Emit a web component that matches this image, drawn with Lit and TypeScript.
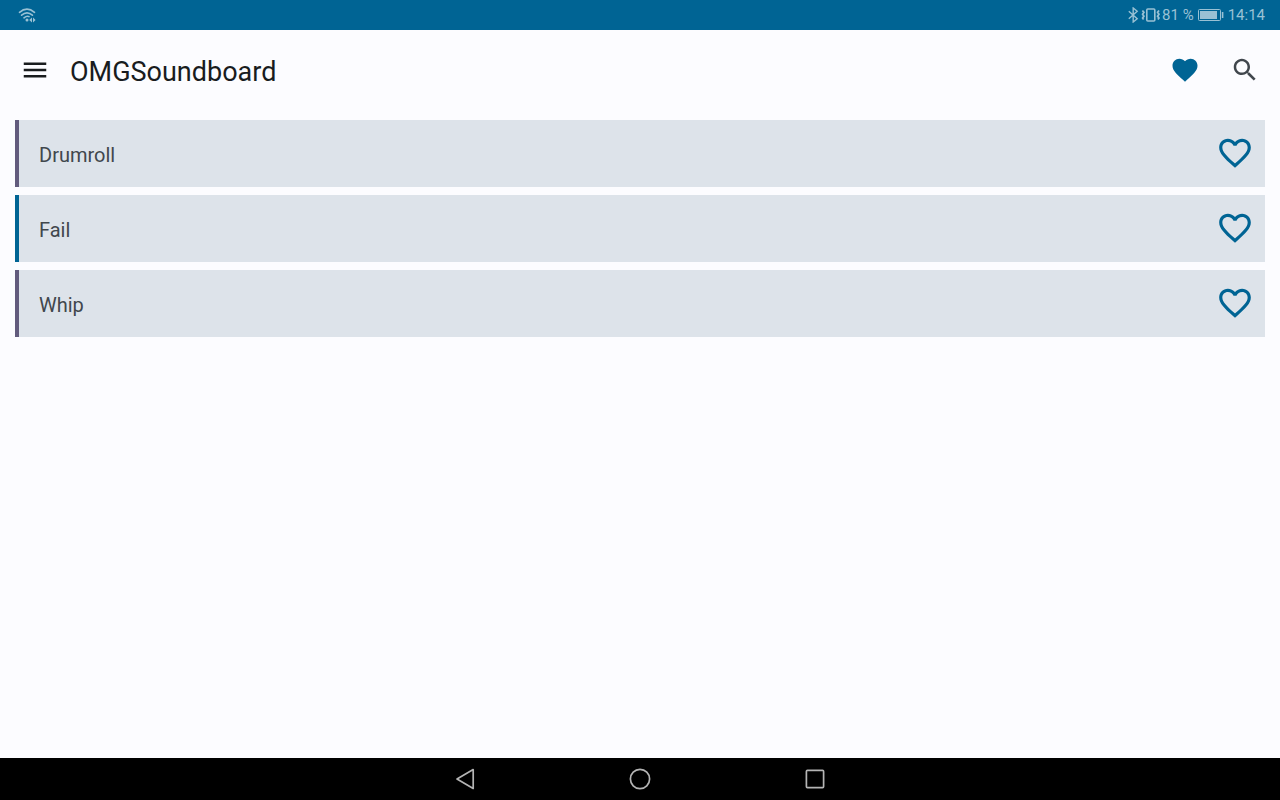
import { LitElement, html, css, svg } from "lit";
import { customElement, property, state } from "lit/decorators.js";

const HEART =
  "M12 21.35l-1.45-1.32C5.4 15.36 2 12.28 2 8.5 2 5.42 4.42 3 7.5 3c1.74 0 3.41.81 4.5 2.09C13.09 3.81 14.76 3 16.5 3 19.58 3 22 5.42 22 8.5c0 3.78-3.4 6.86-8.55 11.54L12 21.35z";
const HEART_OUTLINE =
  "M16.5 3c-1.74 0-3.41.81-4.5 2.09C10.91 3.81 9.24 3 7.5 3 4.42 3 2 5.42 2 8.5c0 3.78 3.4 6.86 8.55 11.54L12 21.35l1.45-1.32C18.6 15.36 22 12.28 22 8.5 22 5.42 19.58 3 16.5 3zm-4.4 15.55l-.1.1-.1-.1C7.14 14.24 4 11.39 4 8.5 4 6.5 5.5 5 7.5 5c1.54 0 3.04.99 3.57 2.36h1.87C13.46 5.99 14.96 5 16.5 5c2 0 3.5 1.5 3.5 3.5 0 2.89-3.14 5.74-7.9 10.05z";
const MENU = "M3 18h18v-2H3v2zm0-5h18v-2H3v2zm0-7v2h18V6H3z";
const SEARCH =
  "M15.5 14h-.79l-.28-.27C15.41 12.59 16 11.11 16 9.5 16 5.91 13.09 3 9.5 3S3 5.91 3 9.5 5.91 16 9.5 16c1.61 0 3.09-.59 4.23-1.57l.27.28v.79l5 4.99L20.49 19l-4.99-5zm-6 0C7.01 14 5 11.99 5 9.5S7.01 5 9.5 5 14 7.01 14 9.5 11.99 14 9.5 14z";

const glyph = (d: string, size: number) => html`
  <svg width=${size} height=${size} viewBox="0 0 24 24" fill="currentColor" aria-hidden="true">
    ${svg`<path d=${d}></path>`}
  </svg>
`;

const buttonReset = css`
  button {
    display: flex;
    align-items: center;
    justify-content: center;
    padding: 0;
    border: 0;
    background: none;
    color: inherit;
    font: inherit;
    cursor: pointer;
  }
  svg {
    display: block;
  }
`;

@customElement("status-bar")
export class StatusBar extends LitElement {
  static styles = css`
    :host {
      display: flex;
      justify-content: space-between;
      align-items: center;
      height: 30px;
      padding: 0 15px 0 18px;
      background: #006494;
      color: #99c1d4;
      font-size: 15px;
      line-height: 20px;
    }
    svg {
      display: block;
    }
    .group {
      display: flex;
      align-items: center;
    }
    .battery {
      margin: 0 4px;
    }
  `;

  render() {
    return html`
      <svg width="18" height="16" viewBox="0 0 18 16" fill="none" stroke="currentColor" stroke-width="1.6" stroke-linecap="round" role="img" aria-label="Wi-Fi">
        <path d="M1.5 5.3Q9 -1.2 16.5 5.3M3.6 8.2Q9 3.6 14.4 8.2M6 10.8Q9 8.4 11 9.6"></path>
        <g fill="currentColor" stroke="none">
          <circle cx="9" cy="13" r="1.5"></circle>
          <path d="M14 10.4v5.2L11.2 13zM15 10.4v5.2l2.6-2.6z"></path>
        </g>
      </svg>
      <div class="group">
        <svg width="14" height="16" viewBox="0 0 14 16" fill="none" stroke="currentColor" stroke-width="1.4" role="img" aria-label="Bluetooth">
          <path d="M1.8 4.2l8.4 7.6L6.2 15V1l4 3.2-8.4 7.6"></path>
        </svg>
        <svg width="21" height="16" viewBox="0 0 21 16" fill="none" stroke="currentColor" role="img" aria-label="Vibrate">
          <rect x="5.8" y="2" width="8" height="12" rx="1" stroke-width="1.6"></rect>
          <path d="M1.4 3.5l1.5 1.8-1.3 2 1.3 1.9-1.3 1.8 1 1.4M18 3.5l-1.4 1.8 1.3 2-1.3 1.9 1.3 1.8-1 1.4" stroke-width="1.8"></path>
        </svg>
        <span>81 %</span>
        <svg class="battery" width="26" height="12" viewBox="0 0 26 12" fill="none" stroke="currentColor" role="img" aria-label="Battery">
          <rect x=".5" y=".5" width="22" height="11" rx="1"></rect>
          <path d="M2 2h17v8H2z" fill="currentColor" stroke="none"></path>
          <path d="M24.6 3v6" stroke-width="1.6"></path>
        </svg>
        <time>14:14</time>
      </div>
    `;
  }
}

@customElement("top-bar")
export class TopBar extends LitElement {
  static styles = [
    buttonReset,
    css`
      :host {
        display: flex;
        align-items: center;
        height: 80px;
        padding: 0 5px;
        color: #191c1e;
      }
      button {
        width: 60px;
        height: 60px;
      }
      h1 {
        flex: 1;
        margin: 0;
        padding: 4px 0 0 5px;
        font-size: 27px;
        font-weight: 400;
        line-height: 36px;
      }
      .favorites {
        color: #006494;
      }
      .search {
        color: #41474d;
      }
    `,
  ];

  render() {
    return html`
      <button aria-label="Open menu">${glyph(MENU, 30)}</button>
      <h1>OMGSoundboard</h1>
      <button class="favorites" aria-label="Show favorites">${glyph(HEART, 30)}</button>
      <button class="search" aria-label="Search">${glyph(SEARCH, 30)}</button>
    `;
  }
}

@customElement("sound-row")
export class SoundRow extends LitElement {
  @property() name = "";
  @state() private favorite = false;

  static styles = [
    buttonReset,
    css`
      :host {
        display: flex;
        height: 67px;
        border-left: 4px solid #625b7d;
        background: #dde3ea;
        color: #41474d;
      }
      :host([accent="primary"]) {
        border-left-color: #006494;
      }
      .play {
        flex: 1;
        justify-content: flex-start;
        padding: 2px 20px 0;
        font-size: 20px;
        line-height: 30px;
      }
      .favorite {
        width: 60px;
        padding-bottom: 2px;
        color: #006494;
      }
    `,
  ];

  render() {
    return html`
      <button class="play">${this.name}</button>
      <button
        class="favorite"
        aria-label="Favorite ${this.name}"
        aria-pressed=${this.favorite}
        @click=${() => (this.favorite = !this.favorite)}
      >
        ${glyph(this.favorite ? HEART : HEART_OUTLINE, 38)}
      </button>
    `;
  }
}

@customElement("navigation-bar")
export class NavigationBar extends LitElement {
  static styles = [
    buttonReset,
    css`
      :host {
        display: flex;
        justify-content: center;
        gap: 133px;
        height: 42px;
        background: #000;
        color: #b4b4b4;
      }
      button {
        width: 42px;
      }
      svg {
        fill: none;
        stroke: currentColor;
        stroke-width: 1.7;
        stroke-linejoin: round;
      }
    `,
  ];

  render() {
    return html`
      <button aria-label="Back">
        <svg width="24" height="24" viewBox="0 0 24 24"><path d="M20.2 2.6v18.8L4 12z"></path></svg>
      </button>
      <button aria-label="Home">
        <svg width="24" height="24" viewBox="0 0 24 24"><circle cx="12" cy="12" r="9.6"></circle></svg>
      </button>
      <button aria-label="Recent apps">
        <svg width="24" height="24" viewBox="0 0 24 24"><rect x="3.4" y="3.4" width="17.2" height="17.2" rx="1"></rect></svg>
      </button>
    `;
  }
}

@customElement("app-root")
export class AppRoot extends LitElement {
  private sounds = [
    { name: "Drumroll", accent: "secondary" },
    { name: "Fail", accent: "primary" },
    { name: "Whip", accent: "secondary" },
  ];

  static styles = css`
    :host {
      display: flex;
      flex-direction: column;
      min-height: 100vh;
      background: #fcfcff;
      font-family: Roboto, "Noto Sans", sans-serif;
    }
    main {
      flex: 1;
      display: flex;
      flex-direction: column;
      gap: 8px;
      padding: 10px 15px;
    }
  `;

  render() {
    return html`
      <status-bar></status-bar>
      <top-bar></top-bar>
      <main>
        ${this.sounds.map((s) => html`<sound-row name=${s.name} accent=${s.accent}></sound-row>`)}
      </main>
      <navigation-bar></navigation-bar>
    `;
  }
}
